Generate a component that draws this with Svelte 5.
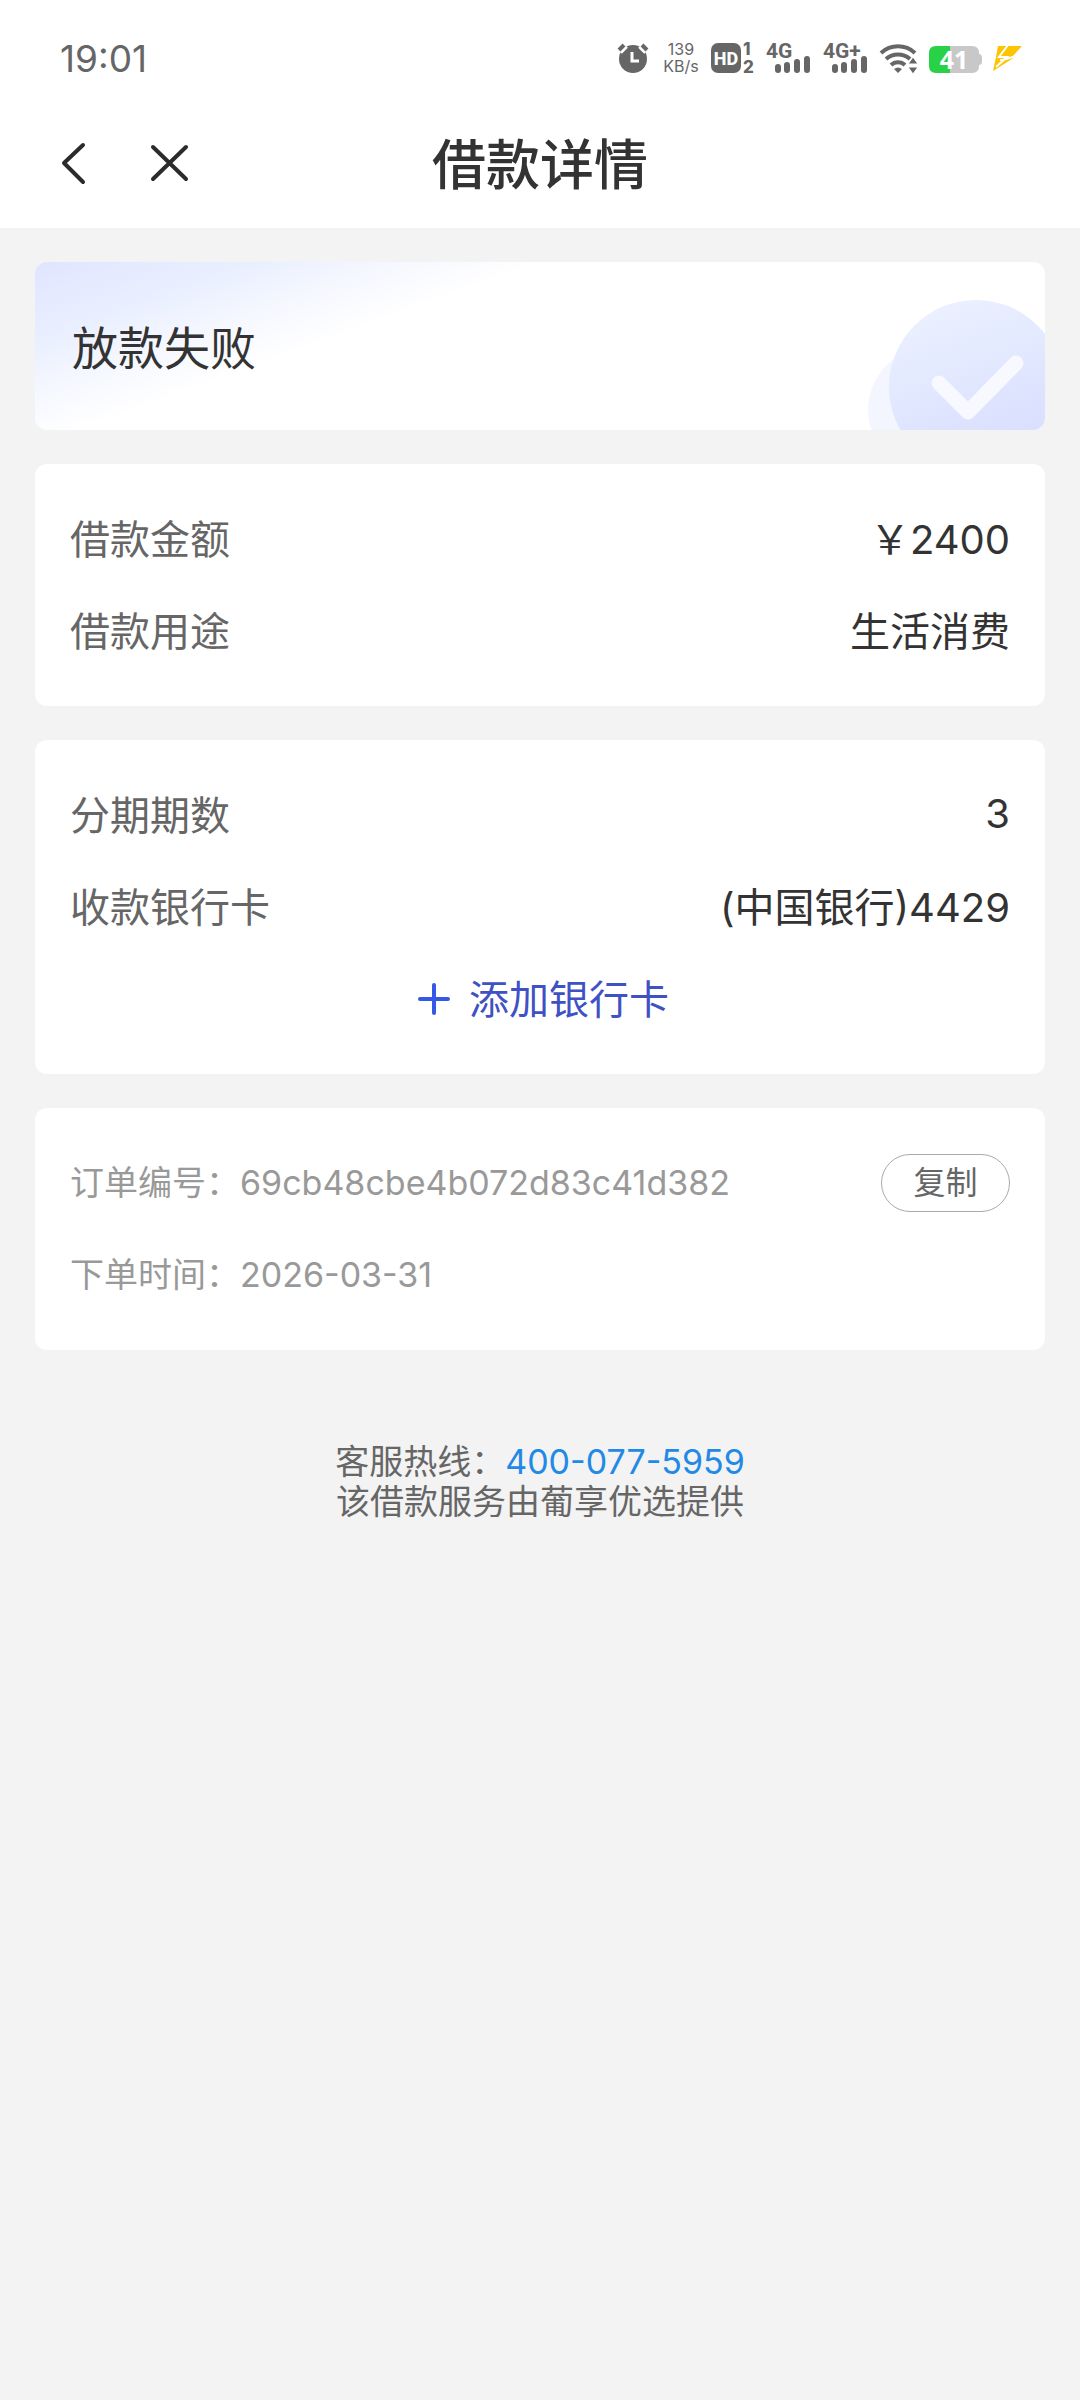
<script>
  let copied = $state(false);

  const loan = [
    { label: '借款金额', value: '￥2400' },
    { label: '借款用途', value: '生活消费' },
  ];

  const account = [
    { label: '分期期数', value: '3' },
    { label: '收款银行卡', value: '(中国银行)4429' },
  ];

  const orderNo = '69cb48cbe4b072d83c41d382';
  const hotline = '400-077-5959';

  function copyOrderNo() {
    navigator.clipboard?.writeText(orderNo);
    copied = true;
  }
</script>

{#snippet signal(name)}
  <svg class="status-icon" width="45" height="32" viewBox="0 0 45 32" aria-hidden="true">
    <text class="signal-name" x="0" y="16">{name}</text>
    <rect x="9" y="22" width="6" height="9" rx="3" />
    <rect x="18" y="20" width="6" height="11" rx="3" />
    <rect x="28" y="17" width="6" height="14" rx="3" />
    <rect x="38" y="14" width="6" height="17" rx="3" />
  </svg>
{/snippet}

<div class="page">
  <div class="status-bar">
    <span class="clock">19:01</span>
    <div class="status-icons">
      <svg class="status-icon" width="33" height="32" viewBox="0 0 33 32" aria-hidden="true">
        <circle cx="15" cy="17" r="14" />
        <path d="M1 9 7 3M23 3l6 6" stroke="#fff" stroke-width="8" />
        <path d="M1 8 6 3M24 3l5 5" stroke="#666" stroke-width="4" />
        <path d="M14 10v9h7" fill="none" stroke="#fff" stroke-width="3" />
      </svg>
      <div class="net-speed"><span>139</span><span>KB/s</span></div>
      <svg class="status-icon" width="43" height="32" viewBox="0 0 43 32" aria-hidden="true">
        <rect x="0" y="1" width="30" height="30" rx="7" />
        <text class="hd" x="15" y="23" text-anchor="middle">HD</text>
        <text class="sim" x="32" y="13">1</text>
        <text class="sim" x="32" y="31">2</text>
      </svg>
      {@render signal('4G')}
      {@render signal('4G+')}
      <svg class="status-icon" width="37" height="32" viewBox="0 0 37 32" aria-hidden="true">
        <g fill="none" stroke="#666" stroke-width="4">
          <path d="M1 11a25 25 0 0 1 34 0" />
          <path d="M6 17a18 18 0 0 1 24 0" />
          <path d="M11 23a10 10 0 0 1 14 0" />
        </g>
        <path d="M18 31l-4-4q4-3 8 0z" />
        <path d="M33 15l5 7H28zM33 32l5-7H28z" stroke="#fff" stroke-width="1" />
      </svg>
      <svg class="status-icon" width="53" height="32" viewBox="0 0 53 32" aria-hidden="true">
        <path d="M8 4h35q7 0 7 7v1q3 0 3 4v3q0 4-3 4v1q0 7-7 7H8z" fill="#c8c8c8" />
        <path d="M7 4h14v27H7q-7 0-7-7V11q0-7 7-7z" fill="#28d146" />
        <text class="level" x="25" y="27" text-anchor="middle">41</text>
      </svg>
      <svg class="status-icon" width="28" height="32" viewBox="0 0 28 32" aria-hidden="true">
        <path d="M4 4h24L18 15h3L-1 29l3-14z" fill="#ffc400" />
        <path d="M14 3 5 15h8L2 25M22 14 9 18h-3" fill="none" stroke="#fff" stroke-width="2" />
      </svg>
    </div>
  </div>

  <header class="nav">
    <div class="nav-buttons">
      <button class="nav-button" aria-label="返回">
        <svg width="40" height="48" viewBox="0 0 40 48">
          <path d="M27 5 8 23l19 19" />
        </svg>
      </button>
      <button class="nav-button" aria-label="关闭">
        <svg width="40" height="48" viewBox="0 0 40 48">
          <path d="M3 7l33 32M36 7 3 39" />
        </svg>
      </button>
    </div>
    <h1>借款详情</h1>
  </header>

  <main>
    <section class="banner">
      <h2>放款失败</h2>
      <svg class="banner-art" width="180" height="140" viewBox="0 0 180 140" aria-hidden="true">
        <defs>
          <linearGradient id="disc" x1="0.3" y1="0" x2="0.6" y2="0.8">
            <stop offset="0" stop-color="#ebf1ff" />
            <stop offset="1" stop-color="#dae0fe" />
          </linearGradient>
        </defs>
        <circle cx="66" cy="120" r="63" fill="#f3f5ff" />
        <circle cx="111" cy="97" r="87" fill="url(#disc)" />
        <path d="M74 93l29 29 48-49" fill="none" stroke="#f7f9ff" stroke-width="15" stroke-linecap="round" stroke-linejoin="round" />
      </svg>
    </section>

    <section class="card">
      {#each loan as item}
        <div class="row">
          <span class="label">{item.label}</span>
          <span class="value">{item.value}</span>
        </div>
      {/each}
    </section>

    <section class="card">
      {#each account as item}
        <div class="row">
          <span class="label">{item.label}</span>
          <span class="value">{item.value}</span>
        </div>
      {/each}
      <button class="row add-card">
        <svg width="46" height="46" viewBox="0 0 46 46" aria-hidden="true">
          <path d="M23 9v28M9 23h28" stroke="#3459e6" stroke-width="4" stroke-linecap="round" />
        </svg>
        <span>添加银行卡</span>
      </button>
    </section>

    <section class="card order">
      <div class="row">
        <span>订单编号：{orderNo}</span>
        <button class="copy" class:copied onclick={copyOrderNo}>复制</button>
      </div>
      <div class="row">
        <span>下单时间：2026-03-31</span>
      </div>
    </section>
  </main>

  <footer>
    <p>客服热线：<a href="tel:{hotline}">{hotline}</a></p>
    <p>该借款服务由葡享优选提供</p>
  </footer>
</div>

<style>
  :global(body) {
    background: #f3f3f3;
  }

  .page {
    min-height: 100vh;
    background: #f3f3f3;
    color: #333;
    font-family: Inter, 'Noto Sans CJK SC', sans-serif;
    font-weight: 400;
  }

  h1,
  h2,
  p {
    margin: 0;
    font-weight: 400;
  }

  button {
    padding: 0;
    border: 0;
    background: none;
    font-family: inherit;
    cursor: pointer;
  }

  svg {
    display: block;
  }

  /* status bar */
  .status-bar {
    display: flex;
    align-items: center;
    justify-content: space-between;
    height: 116px;
    padding: 0 58px 0 60px;
    background: #fff;
    color: #666;
  }

  .clock {
    font-size: 37px;
  }

  .status-icons {
    display: flex;
    align-items: center;
    gap: 12px;
  }

  .status-icon {
    fill: #666;
    overflow: visible;
  }

  .net-speed {
    display: flex;
    flex-direction: column;
    align-items: center;
    width: 36px;
    font-size: 16px;
    line-height: 17px;
  }

  .signal-name {
    font-size: 21px;
    font-weight: 700;
    font-family: Roboto, sans-serif;
  }

  .hd {
    fill: #fff;
    font-size: 18px;
    font-weight: 800;
    font-family: Roboto, sans-serif;
  }

  .sim {
    font-size: 17px;
    font-weight: 800;
  }

  .level {
    fill: #fff;
    font-size: 25px;
    font-weight: 700;
    font-family: 'Noto Sans', sans-serif;
  }

  /* title bar */
  .nav {
    display: grid;
    grid-template-columns: 1fr auto 1fr;
    align-items: center;
    height: 112px;
    padding: 0 56px 16px;
    box-sizing: border-box;
    background: #fff;
  }

  .nav-buttons {
    display: flex;
    gap: 54px;
  }

  .nav-button svg {
    fill: none;
    stroke: #2b2b2b;
    stroke-width: 4;
    stroke-linecap: round;
    stroke-linejoin: round;
  }

  .nav h1 {
    padding-top: 4px;
    font-size: 54px;
    line-height: 64px;
    font-weight: 500;
  }

  main {
    display: flex;
    flex-direction: column;
    gap: 34px;
    padding: 34px 35px 0;
  }

  .banner,
  .card {
    border-radius: 12px;
    background: #fff;
  }

  .banner {
    position: relative;
    display: flex;
    align-items: center;
    height: 168px;
    padding: 0 37px;
    overflow: hidden;
    background: linear-gradient(160deg, #e0e5ff 0, #eaf0ff 80px, #f5f7ff 120px, #fff 175px);
  }

  .banner h2 {
    padding-top: 4px;
    font-size: 46px;
    line-height: 56px;
  }

  .banner-art {
    position: absolute;
    right: 0;
    bottom: 0;
  }

  .card {
    padding: 29px 35px;
  }

  .row {
    display: flex;
    align-items: center;
    justify-content: space-between;
    width: 100%;
    height: 92px;
    font-size: 40px;
  }

  .row span {
    padding-bottom: 4px;
  }

  .label {
    color: #666;
  }

  .add-card {
    justify-content: center;
    gap: 12px;
    color: #3f51c4;
  }

  .order .row {
    color: #999;
    font-size: 34px;
  }

  .order .row span {
    padding-bottom: 6px;
  }

  .copy {
    width: 129px;
    height: 58px;
    border: 1px solid #aaa;
    border-radius: 29px;
    color: #666;
    font-size: 32px;
    line-height: 48px;
  }

  .copy.copied {
    color: #999;
  }

  footer {
    padding-top: 92px;
    color: #666;
    font-size: 34px;
    line-height: 40px;
    text-align: center;
  }

  footer a {
    color: #2289e6;
    text-decoration: none;
  }
</style>
